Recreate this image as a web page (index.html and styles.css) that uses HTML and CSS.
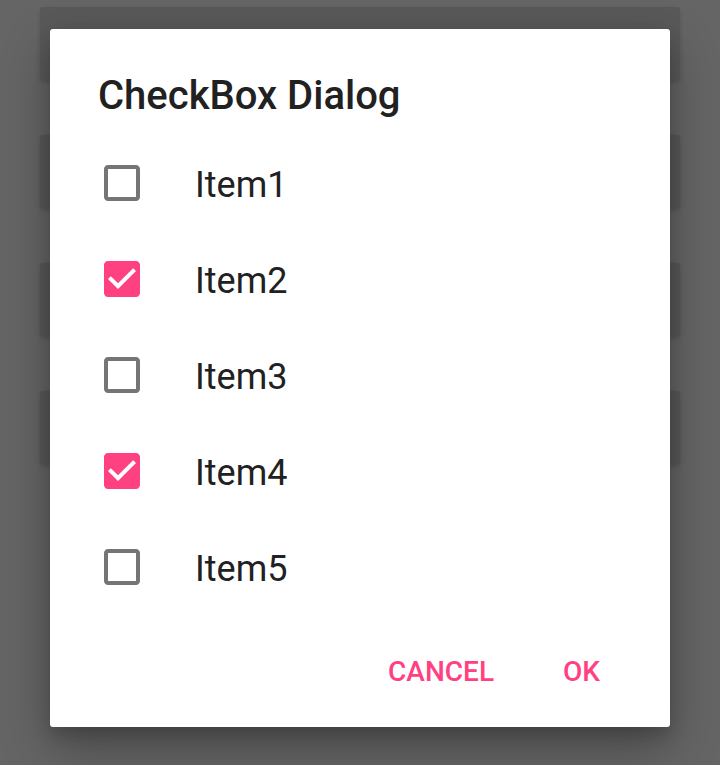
FILE: index.html
```html
<!DOCTYPE html>
<html>
<head>
<meta charset="utf-8">
<link rel="stylesheet" href="styles.css">
</head>
<body>
<div class="screen">
  <div class="cards">
    <div class="card"></div>
    <div class="card"></div>
    <div class="card"></div>
    <div class="card"></div>
  </div>
  <div class="dialog">
    <div class="title">CheckBox Dialog</div>
    <div class="list">
      <div class="row">
        <svg class="cb" viewBox="0 0 24 24"><path fill="#757575" d="M19 5v14H5V5h14m0-2H5c-1.1 0-2 .9-2 2v14c0 1.1.9 2 2 2h14c1.1 0 2-.9 2-2V5c0-1.1-.9-2-2-2z"/></svg>
        <span class="label">Item1</span>
      </div>
      <div class="row">
        <svg class="cb" viewBox="0 0 24 24"><path fill="#ff4081" d="M19 3H5c-1.11 0-2 .9-2 2v14c0 1.1.89 2 2 2h14c1.11 0 2-.9 2-2V5c0-1.1-.89-2-2-2zm-9 14l-5-5 1.41-1.41L10 14.170l7.59-7.59L19 8l-9 9z"/></svg>
        <span class="label">Item2</span>
      </div>
      <div class="row">
        <svg class="cb" viewBox="0 0 24 24"><path fill="#757575" d="M19 5v14H5V5h14m0-2H5c-1.1 0-2 .9-2 2v14c0 1.1.9 2 2 2h14c1.1 0 2-.9 2-2V5c0-1.1-.9-2-2-2z"/></svg>
        <span class="label">Item3</span>
      </div>
      <div class="row">
        <svg class="cb" viewBox="0 0 24 24"><path fill="#ff4081" d="M19 3H5c-1.11 0-2 .9-2 2v14c0 1.1.89 2 2 2h14c1.11 0 2-.9 2-2V5c0-1.1-.89-2-2-2zm-9 14l-5-5 1.41-1.41L10 14.170l7.59-7.59L19 8l-9 9z"/></svg>
        <span class="label">Item4</span>
      </div>
      <div class="row">
        <svg class="cb" viewBox="0 0 24 24"><path fill="#757575" d="M19 5v14H5V5h14m0-2H5c-1.1 0-2 .9-2 2v14c0 1.1.9 2 2 2h14c1.1 0 2-.9 2-2V5c0-1.1-.9-2-2-2z"/></svg>
        <span class="label">Item5</span>
      </div>
    </div>
    <div class="buttons">
      <span class="btn">CANCEL</span>
      <span class="btn">OK</span>
    </div>
  </div>
</div>
</body>
</html>
```
FILE: styles.css
```css
html, body {
  margin: 0;
  padding: 0;
}
body {
  background: #656565;
  font-family: Roboto, "Noto Sans", sans-serif;
  overflow: hidden;
}
.screen {
  position: relative;
  width: 720px;
  height: 765px;
  overflow: hidden;
}
.cards {
  display: flex;
  flex-direction: column;
  gap: 55px;
  padding: 7px 40px 0;
}
.card {
  height: 73px;
  background: #595959;
  border-radius: 3px;
  box-shadow: 0 2px 4px rgba(0,0,0,0.15);
}
.dialog {
  position: absolute;
  left: 50px;
  top: 29px;
  width: 620px;
  height: 698px;
  background: #ffffff;
  border-radius: 3px;
  box-shadow: 0 20px 50px rgba(0,0,0,0.3), 0 8px 16px rgba(0,0,0,0.15);
  box-sizing: border-box;
  padding-top: 43px;
  display: flex;
  flex-direction: column;
}
.title {
  font-size: 40px;
  font-weight: 500;
  line-height: 48px;
  color: #212121;
  padding-left: 48px;
}
.list {
  margin-top: 15px;
  display: flex;
  flex-direction: column;
}
.row {
  height: 96px;
  display: flex;
  align-items: center;
  padding-left: 48px;
}
.cb {
  width: 48px;
  height: 48px;
  flex: none;
}
.label {
  margin-left: 49px;
  font-size: 36px;
  color: #212121;
  padding-top: 4px;
}
.buttons {
  margin-top: 33px;
  display: flex;
  justify-content: flex-end;
  gap: 69px;
  padding-right: 70px;
}
.btn {
  font-size: 28px;
  font-weight: 500;
  line-height: 48px;
  color: #ff4081;
}
```
